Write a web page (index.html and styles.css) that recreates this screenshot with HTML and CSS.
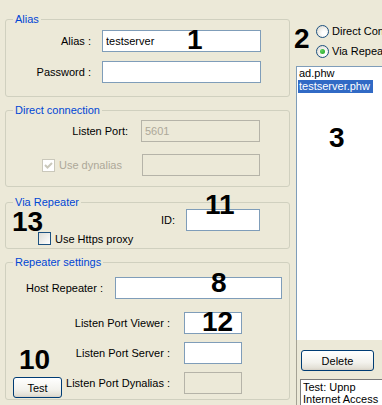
FILE: index.html
```html
<!DOCTYPE html>
<html lang="en">
<head>
    <meta charset="UTF-8">
    <title>Connection settings</title>
    <link rel="stylesheet" href="styles.css">
</head>
<body>
    <div class="dialog">
        <div class="settings">
            <fieldset class="group group-alias">
                <legend>Alias</legend>
                <div class="form form-alias">
                    <label class="field-label">Alias :</label>
                    <input class="text" type="text" value="testserver">
                    <label class="field-label">Password :</label>
                    <input class="text" type="password">
                </div>
            </fieldset>

            <fieldset class="group group-direct">
                <legend>Direct connection</legend>
                <div class="form form-direct">
                    <label class="field-label">Listen Port:</label>
                    <input class="text" type="text" value="5601" disabled>
                    <label class="check check-dynalias disabled">
                        <span class="box"><svg viewBox="0 0 11 11" width="11" height="11"><polyline points="2,5 4.5,7.5 9,3" /></svg></span>
                        Use dynalias
                    </label>
                    <input class="text" type="text" disabled>
                </div>
            </fieldset>

            <fieldset class="group group-via">
                <legend>Via Repeater</legend>
                <div class="form form-via">
                    <label class="field-label">ID:</label>
                    <input class="text" type="text">
                    <label class="check check-https">
                        <span class="box"></span>
                        Use Https proxy
                    </label>
                </div>
            </fieldset>

            <fieldset class="group group-repeater">
                <legend>Repeater settings</legend>
                <div class="form form-host">
                    <label class="field-label">Host Repeater :</label>
                    <input class="text" type="text">
                </div>
                <div class="form form-ports">
                    <label class="field-label">Listen Port Viewer :</label>
                    <input class="text" type="text">
                    <label class="field-label">Listen Port Server :</label>
                    <input class="text" type="text">
                    <button class="btn btn-test">Test</button>
                    <label class="field-label">Listen Port Dynalias :</label>
                    <input class="text" type="text" disabled>
                </div>
            </fieldset>
        </div>

        <div class="side">
            <div class="mode">
                <label class="radio-row"><span class="radio"></span>Direct Connection</label>
                <label class="radio-row"><span class="radio checked"></span>Via Repeater</label>
            </div>
            <div class="files">
                <div class="file">ad.phw</div>
                <div class="file selected">testserver.phw</div>
            </div>
            <div class="side-bottom">
                <button class="btn btn-delete">Delete</button>
                <div class="status">Test: Upnp<br>Internet Access</div>
            </div>
        </div>

        <!-- callout numbers drawn over the dialog -->
        <span class="tag tag-1">1</span>
        <span class="tag tag-2">2</span>
        <span class="tag tag-3">3</span>
        <span class="tag tag-8">8</span>
        <span class="tag tag-10">10</span>
        <span class="tag tag-11">11</span>
        <span class="tag tag-12">12</span>
        <span class="tag tag-13">13</span>
    </div>
</body>
</html>
```

FILE: styles.css
```css
:root {
    --face: #ece9d8;
    --group-line: #d0d0bf;
    --caption: #0046d5;
    --field-line: #7f9db9;
    --disabled-line: #b5b3a8;
    --disabled-text: #aca899;
    --select: #316ac5;
}

* {
    margin: 0;
    padding: 0;
    box-sizing: border-box;
}

body {
    background-color: var(--face);
    font-family: 'Liberation Sans', Arial, sans-serif;
    font-size: 11px;
    color: #000;
    overflow: hidden;
}

.dialog {
    position: relative;
    display: grid;
    grid-template-columns: 296px 1fr;
    width: 382px;
    height: 405px;
    overflow: hidden;
}

/* left column: group boxes */

.settings {
    padding: 13px 0 0 5px;
}

.group {
    width: 285px;
    border: 1px solid var(--group-line);
    border-radius: 3px;
    padding: 0;
    min-width: 0;
}

.group legend {
    margin-left: 7px;
    padding: 0 2px;
    line-height: 13px;
    color: var(--caption);
}

.form {
    display: grid;
    align-items: center;
}

.field-label {
    text-align: right;
    white-space: nowrap;
}

.text {
    height: 22px;
    border: 1px solid var(--field-line);
    background: #fff;
    padding: 0 3px;
    font: inherit;
    color: #000;
    outline: none;
}

.text:disabled {
    background: var(--face);
    border-color: var(--disabled-line);
    color: var(--disabled-text);
}

.group-alias {
    padding: 4px 0 13px;
}

.form-alias {
    grid-template-columns: 85px 159px;
    column-gap: 11px;
    row-gap: 9px;
}

.group-direct {
    margin-top: 7px;
    padding: 3px 0 10px;
}

.form-direct {
    grid-template-columns: 122px 119px;
    column-gap: 13px;
    row-gap: 12px;
}

.form-direct .text:last-child {
    margin-left: 1px;
}

.group-via {
    margin-top: 9px;
    padding: 0 0 3px;
}

.form-via {
    grid-template-columns: 169px 74px;
    column-gap: 11px;
    row-gap: 1px;
}

.group-repeater {
    margin-top: 7px;
    padding: 8px 0 5px;
}

.form-host {
    grid-template-columns: 97px 167px;
    column-gap: 12px;
}

.form-ports {
    margin-top: 13px;
    grid-template-columns: 57px 107px 72px;
    grid-template-rows: 22px 22px 22px;
    row-gap: 8px;
}

.form-ports .field-label {
    grid-column: 2;
}

.form-ports .text {
    grid-column: 3;
    justify-self: end;
    width: 58px;
}

.btn {
    font: inherit;
    color: #000;
    border: 1px solid #003c74;
    border-radius: 3px;
    background: linear-gradient(#ffffff, #f3f2ed 60%, #e3e0d6 90%, #d6d0c5);
}

.btn-test {
    grid-column: 1;
    grid-row: 3;
    align-self: start;
    width: 49px;
    height: 21px;
    margin: 5px 0 0 7px;
}

/* check boxes */

.check {
    display: flex;
    align-items: center;
    gap: 4px;
    white-space: nowrap;
}

.check .box {
    width: 13px;
    height: 13px;
    border: 1px solid #1c5180;
    background: linear-gradient(135deg, #dcdcd7, #ffffff);
    display: flex;
    align-items: center;
    justify-content: center;
}

.check svg polyline {
    fill: none;
    stroke-width: 2;
}

.check.disabled {
    color: var(--disabled-text);
}

.check.disabled .box {
    border-color: #cac8bb;
    background: #fff;
}

.check.disabled svg polyline {
    stroke: #cac8bb;
}

.check-dynalias {
    grid-column: 1;
    justify-self: start;
    margin-left: 36px;
}

.check-https {
    grid-column: 1 / 3;
    justify-self: start;
    margin-left: 32px;
    height: 13px;
}

/* right column */

.side {
    display: flex;
    flex-direction: column;
    white-space: nowrap;
}

.mode {
    height: 66px;
    padding: 21px 0 0 20px;
}

.radio-row {
    display: flex;
    align-items: center;
    gap: 3px;
    height: 20px;
}

.radio {
    flex: none;
    width: 13px;
    height: 13px;
    border-radius: 50%;
    border: 1px solid #1c5180;
    background: radial-gradient(circle at 65% 65%, #ffffff 20%, #d6d3c8);
    display: flex;
    align-items: center;
    justify-content: center;
}

.radio.checked::after {
    content: '';
    width: 5px;
    height: 5px;
    border-radius: 50%;
    background: radial-gradient(circle at 35% 35%, #5fd35f, #21a121);
}

.files {
    height: 274px;
    background: #fff;
    border-top: 1px solid var(--field-line);
    border-left: 1px solid var(--field-line);
    padding: 0 0 0 1px;
    line-height: 13px;
}

.file {
    padding-left: 1px;
    width: 75px;
}

.file.selected {
    background: var(--select);
    color: #fff;
}

.side-bottom {
    flex: 1;
    border-left: 1px solid #a5a295;
    padding: 10px 0 0 4px;
}

.btn-delete {
    display: block;
    width: 73px;
    height: 21px;
}

.status {
    margin: 8px 0 0 -1px;
    height: 40px;
    background: #fff;
    border-top: 1px solid #7a7a7a;
    border-left: 1px solid #7a7a7a;
    padding: 1px 0 0 2px;
    line-height: 12px;
}

/* callout numbers */

.tag {
    position: absolute;
    font-family: 'Liberation Sans', Arial, sans-serif;
    font-weight: 700;
    font-size: 28px;
    line-height: 28px;
    color: #000;
}

.tag-1 { left: 187px; top: 26px; }
.tag-2 { left: 294px; top: 25px; }
.tag-3 { left: 329px; top: 124px; }
.tag-8 { left: 211px; top: 269px; }
.tag-10 { left: 19px; top: 346px; }
.tag-11 { left: 205px; top: 191px; }
.tag-12 { left: 202px; top: 308px; }
.tag-13 { left: 12px; top: 208px; }
```
